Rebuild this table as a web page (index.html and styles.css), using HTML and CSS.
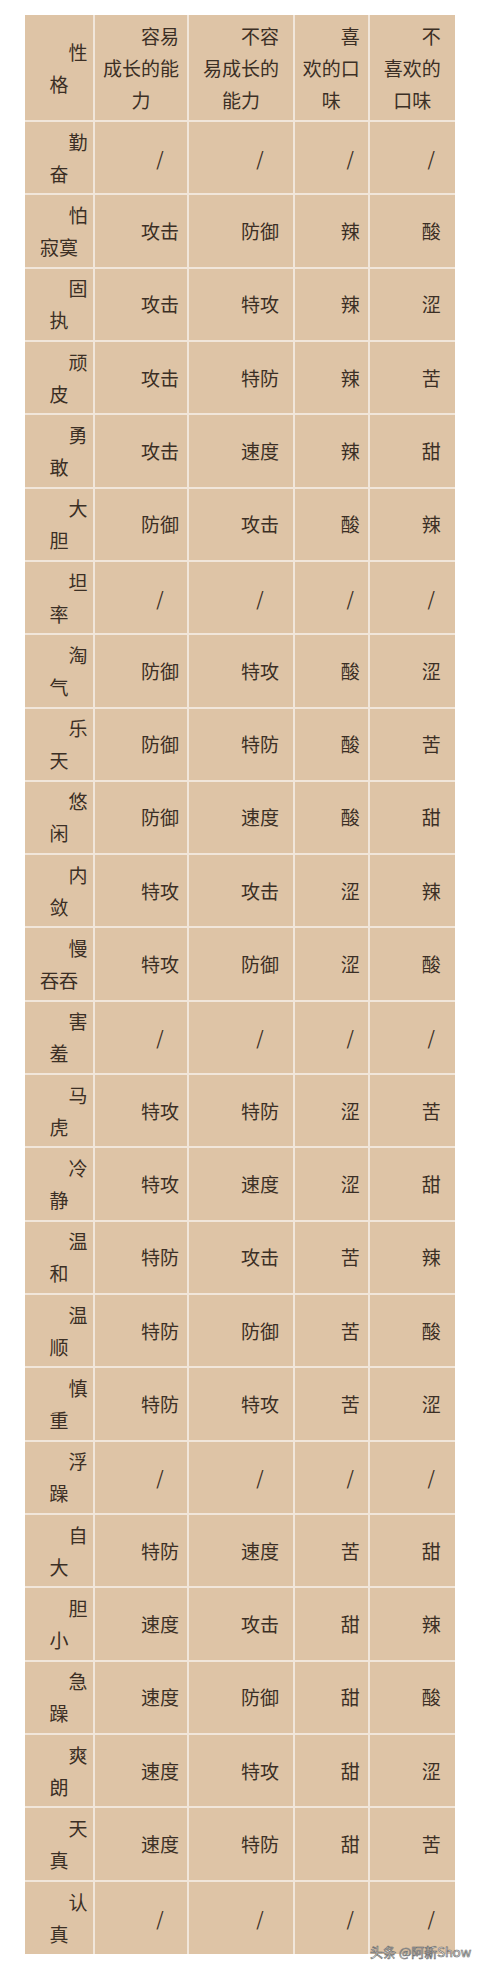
FILE: index.html
```html
<!DOCTYPE html>
<html lang="zh-CN">
<head>
<meta charset="utf-8">
<title>性格表</title>
<link rel="stylesheet" href="styles.css">
</head>
<body>
<div class="page">
  <table class="nature">
    <colgroup>
      <col class="c1"><col class="c2"><col class="c3"><col class="c4"><col class="c5">
    </colgroup>
    <thead>
      <tr class="head">
        <th>性<br>格</th>
        <th>容易<br>成长的能<br>力</th>
        <th>不容<br>易成长的<br>能力</th>
        <th>喜<br>欢的口<br>味</th>
        <th>不<br>喜欢的<br>口味</th>
      </tr>
    </thead>
    <tbody>
      <tr><td>勤<br>奋</td><td>/</td><td>/</td><td>/</td><td>/</td></tr>
      <tr><td>怕<br>寂寞</td><td>攻击</td><td>防御</td><td>辣</td><td>酸</td></tr>
      <tr><td>固<br>执</td><td>攻击</td><td>特攻</td><td>辣</td><td>涩</td></tr>
      <tr><td>顽<br>皮</td><td>攻击</td><td>特防</td><td>辣</td><td>苦</td></tr>
      <tr><td>勇<br>敢</td><td>攻击</td><td>速度</td><td>辣</td><td>甜</td></tr>
      <tr><td>大<br>胆</td><td>防御</td><td>攻击</td><td>酸</td><td>辣</td></tr>
      <tr><td>坦<br>率</td><td>/</td><td>/</td><td>/</td><td>/</td></tr>
      <tr><td>淘<br>气</td><td>防御</td><td>特攻</td><td>酸</td><td>涩</td></tr>
      <tr><td>乐<br>天</td><td>防御</td><td>特防</td><td>酸</td><td>苦</td></tr>
      <tr><td>悠<br>闲</td><td>防御</td><td>速度</td><td>酸</td><td>甜</td></tr>
      <tr><td>内<br>敛</td><td>特攻</td><td>攻击</td><td>涩</td><td>辣</td></tr>
      <tr><td>慢<br>吞吞</td><td>特攻</td><td>防御</td><td>涩</td><td>酸</td></tr>
      <tr><td>害<br>羞</td><td>/</td><td>/</td><td>/</td><td>/</td></tr>
      <tr><td>马<br>虎</td><td>特攻</td><td>特防</td><td>涩</td><td>苦</td></tr>
      <tr><td>冷<br>静</td><td>特攻</td><td>速度</td><td>涩</td><td>甜</td></tr>
      <tr><td>温<br>和</td><td>特防</td><td>攻击</td><td>苦</td><td>辣</td></tr>
      <tr><td>温<br>顺</td><td>特防</td><td>防御</td><td>苦</td><td>酸</td></tr>
      <tr><td>慎<br>重</td><td>特防</td><td>特攻</td><td>苦</td><td>涩</td></tr>
      <tr><td>浮<br>躁</td><td>/</td><td>/</td><td>/</td><td>/</td></tr>
      <tr><td>自<br>大</td><td>特防</td><td>速度</td><td>苦</td><td>甜</td></tr>
      <tr><td>胆<br>小</td><td>速度</td><td>攻击</td><td>甜</td><td>辣</td></tr>
      <tr><td>急<br>躁</td><td>速度</td><td>防御</td><td>甜</td><td>酸</td></tr>
      <tr><td>爽<br>朗</td><td>速度</td><td>特攻</td><td>甜</td><td>涩</td></tr>
      <tr><td>天<br>真</td><td>速度</td><td>特防</td><td>甜</td><td>苦</td></tr>
      <tr><td>认<br>真</td><td>/</td><td>/</td><td>/</td><td>/</td></tr>
    </tbody>
  </table>
  <div class="watermark">头条 @阿新Show</div>
</div>
</body>
</html>
```

FILE: styles.css
```css
html, body {
  margin: 0;
  padding: 0;
  background: #ffffff;
}

.page {
  position: relative;
  width: 480px;
  height: 1969px;
  padding: 15px 0 0 25px;
  box-sizing: border-box;
}

.nature {
  table-layout: fixed;
  width: 430px;
  border-collapse: collapse;
  border-style: hidden;
  background: #dec4a6;
  font-family: "Noto Sans CJK SC", "Noto Sans", sans-serif;
  font-size: 19px;
  line-height: 32px;
  color: #3b2f25;
}

.c1 { width: 69px; }
.c2 { width: 94px; }
.c3 { width: 106px; }
.c4 { width: 74.5px; }
.c5 { width: 86.5px; }

.nature th,
.nature td {
  border: 2px solid #f1e6da;
  padding: 0;
  text-align: center;
  text-indent: 2em;
  white-space: nowrap;
  vertical-align: middle;
  font-weight: normal;
}

.head { height: 106px; }
.nature tbody tr { height: 73.32px; }

.watermark {
  position: absolute;
  left: 370px;
  top: 1943px;
  font-family: "Noto Sans CJK SC", "Noto Sans", sans-serif;
  font-size: 13px;
  line-height: 18px;
  color: #ffffff;
  -webkit-text-stroke: 0.6px #6d6d6d;
  text-shadow: 0 0 1px rgba(0,0,0,0.35);
  white-space: nowrap;
}
```
